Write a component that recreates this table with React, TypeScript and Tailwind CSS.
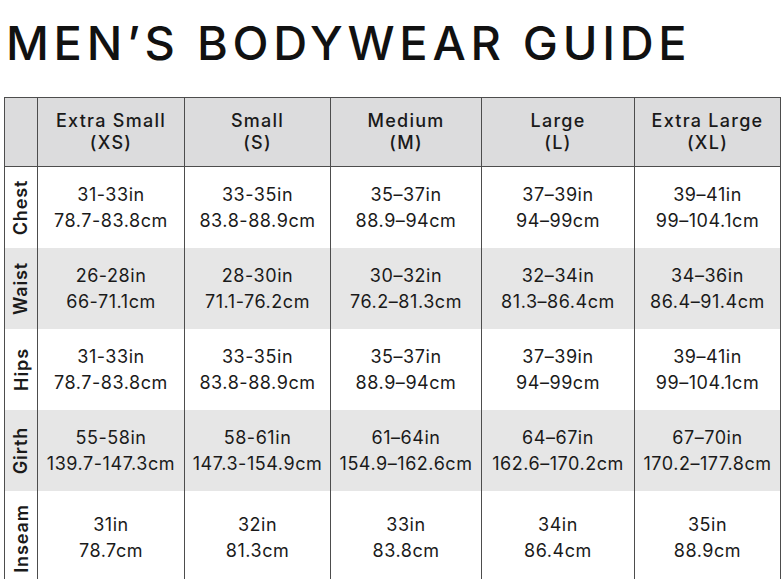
import React from 'react';

const SIZES = [
    { name: 'Extra Small', code: '(XS)' },
    { name: 'Small', code: '(S)' },
    { name: 'Medium', code: '(M)' },
    { name: 'Large', code: '(L)' },
    { name: 'Extra Large', code: '(XL)' },
];

const ROWS: { label: string; striped: boolean; tall?: boolean; cells: [string, string][] }[] = [
    {
        label: 'Chest', striped: false,
        cells: [['31-33in', '78.7-83.8cm'], ['33-35in', '83.8-88.9cm'], ['35–37in', '88.9–94cm'], ['37–39in', '94–99cm'], ['39–41in', '99–104.1cm']],
    },
    {
        label: 'Waist', striped: true,
        cells: [['26-28in', '66-71.1cm'], ['28-30in', '71.1-76.2cm'], ['30–32in', '76.2–81.3cm'], ['32–34in', '81.3–86.4cm'], ['34–36in', '86.4–91.4cm']],
    },
    {
        label: 'Hips', striped: false,
        cells: [['31-33in', '78.7-83.8cm'], ['33-35in', '83.8-88.9cm'], ['35–37in', '88.9–94cm'], ['37–39in', '94–99cm'], ['39–41in', '99–104.1cm']],
    },
    {
        label: 'Girth', striped: true,
        cells: [['55-58in', '139.7-147.3cm'], ['58-61in', '147.3-154.9cm'], ['61–64in', '154.9–162.6cm'], ['64–67in', '162.6–170.2cm'], ['67–70in', '170.2–177.8cm']],
    },
    {
        label: 'Inseam', striped: false, tall: true,
        cells: [['31in', '78.7cm'], ['32in', '81.3cm'], ['33in', '83.8cm'], ['34in', '86.4cm'], ['35in', '88.9cm']],
    },
];

export default function App() {
    return (
        <div
            className="w-[781px] h-[579px] overflow-hidden bg-white text-[#1a1a1a]"
            style={{ fontFamily: 'Inter, "Noto Sans", sans-serif' }}
        >
            <h1 className="pl-[6px] pt-[20px] text-[47px] font-medium leading-[46px] tracking-[0.1em] text-[#111]">
                MEN’S BODYWEAR GUIDE
            </h1>

            <div className="ml-[4px] mt-[31px] w-[777px] border border-[#4d4d4d]">
                <div className="grid grid-cols-[33px_147px_146px_151px_153px_145px]">
                    {/* header */}
                    <div className="h-[69px] border-r border-b border-[#4d4d4d] bg-[#dcdcdd]" />
                    {SIZES.map((s, i) => (
                        <div
                            key={s.code}
                            className={`h-[69px] border-b border-[#4d4d4d] bg-[#dcdcdd] flex flex-col items-center justify-center text-[18px] leading-[22px] font-medium tracking-[0.07em] ${i < 4 ? 'border-r' : ''}`}
                        >
                            <span>{s.name}</span>
                            <span>{s.code}</span>
                        </div>
                    ))}

                    {ROWS.map((r) => (
                        <React.Fragment key={r.label}>
                            <div className={`${r.tall ? 'h-[94px]' : 'h-[81px]'} border-r border-[#4d4d4d] flex items-center justify-center ${r.striped ? 'bg-[#e6e6e6]' : 'bg-white'}`}>
                                <span className="-rotate-90 whitespace-nowrap text-[18px] font-semibold tracking-[0.05em]">{r.label}</span>
                            </div>
                            {r.cells.map(([inch, cm], i) => (
                                <div
                                    key={i}
                                    className={`${r.tall ? 'h-[94px]' : 'h-[81px]'} border-[#4d4d4d] flex flex-col items-center justify-center text-[18px] leading-[26px] tracking-[0.03em] ${i < 4 ? 'border-r' : ''} ${r.striped ? 'bg-[#e6e6e6]' : 'bg-white'}`}
                                >
                                    <span>{inch}</span>
                                    <span>{cm}</span>
                                </div>
                            ))}
                        </React.Fragment>
                    ))}
                </div>
            </div>
        </div>
    );
}
